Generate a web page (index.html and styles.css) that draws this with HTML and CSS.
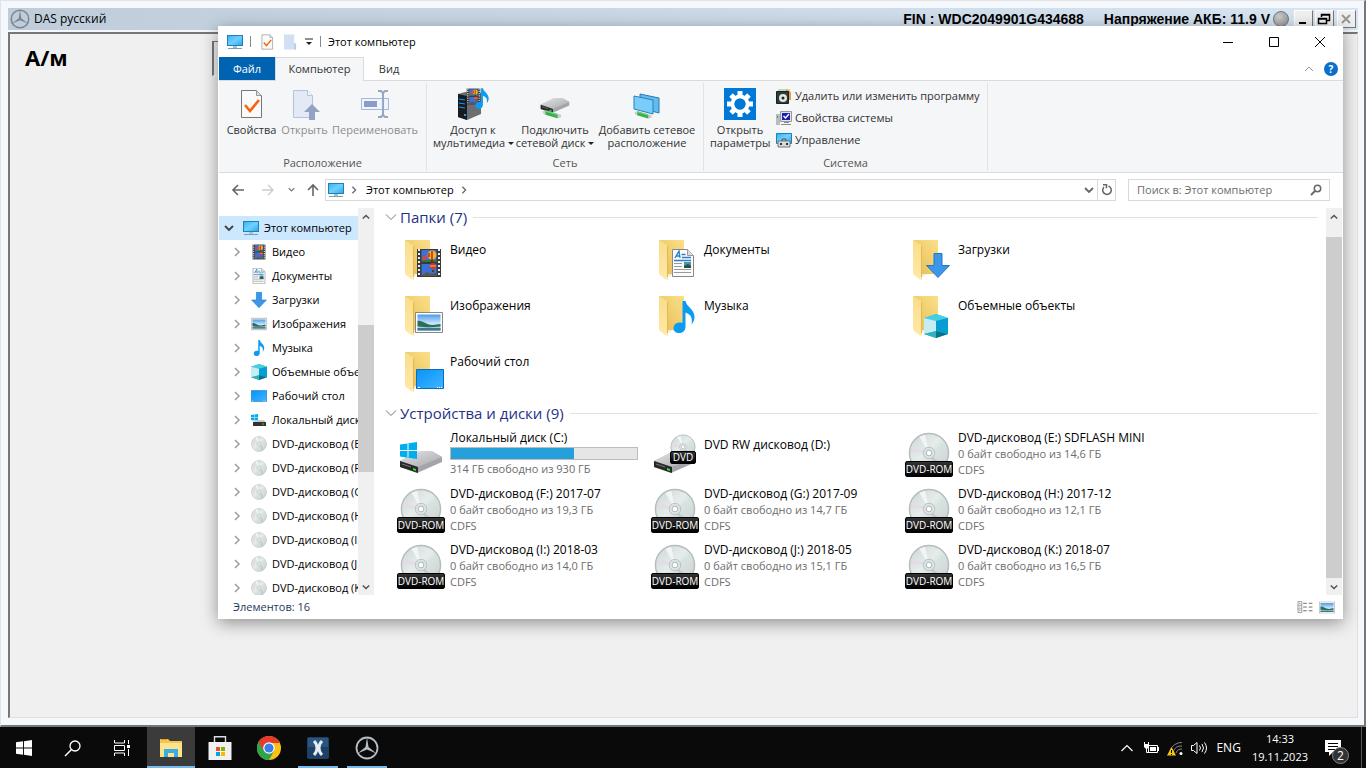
FILE: index.html
```html
<!DOCTYPE html>
<html lang="ru">
<head>
    <meta charset="UTF-8">
    <meta name="viewport" content="width=device-width, initial-scale=1.0">
    <title>Этот компьютер</title>
    <link rel="stylesheet" href="styles.css">
</head>
<body>
    <!-- Icon sprite -->
    <svg class="sprite" aria-hidden="true">
        <defs>
            <linearGradient id="gScreen" x1="0" y1="0" x2="1" y2="1"><stop offset="0" stop-color="#35b2f3"/><stop offset="0.5" stop-color="#6fd0ff"/><stop offset="1" stop-color="#2aa5ec"/></linearGradient>
            <linearGradient id="gFolder" x1="1" y1="0" x2="0" y2="1"><stop offset="0" stop-color="#fbe08a"/><stop offset="1" stop-color="#e6bc52"/></linearGradient>
            <linearGradient id="gFlap" x1="0" y1="0" x2="0" y2="1"><stop offset="0" stop-color="#f9dd8a"/><stop offset="1" stop-color="#ffe9a8"/></linearGradient>
            <linearGradient id="gDisc" x1="0" y1="0" x2="1" y2="1"><stop offset="0" stop-color="#cbd5d5"/><stop offset="0.45" stop-color="#e6ecec"/><stop offset="0.6" stop-color="#d8e0e0"/><stop offset="1" stop-color="#c8cfcf"/></linearGradient>
            <linearGradient id="gSky" x1="0" y1="0" x2="0" y2="1"><stop offset="0" stop-color="#4c9bea"/><stop offset="0.6" stop-color="#d4ebf8"/><stop offset="1" stop-color="#7fb2d0"/></linearGradient>
            <linearGradient id="gDrive" x1="0" y1="0" x2="1" y2="1"><stop offset="0" stop-color="#e6e6e8"/><stop offset="1" stop-color="#a5a6aa"/></linearGradient>
            <linearGradient id="gDesk" x1="0" y1="0" x2="1" y2="1"><stop offset="0" stop-color="#0b93f5"/><stop offset="0.5" stop-color="#22a4ff"/><stop offset="1" stop-color="#45b4ff"/></linearGradient>
        </defs>
        <symbol id="i-pc" viewBox="0 0 16 16">
            <rect x="0.5" y="1.5" width="15" height="10" fill="url(#gScreen)" stroke="#1f7fb8"/>
            <path d="M6 12h4v2H6z" fill="#9fc3da"/><path d="M1 14.5h14" stroke="#7d9db2"/>
        </symbol>
        <symbol id="i-chev" viewBox="0 0 10 10"><path d="M3 1l4 4-4 4" fill="none" stroke="currentColor" stroke-width="1.6"/></symbol>
        <symbol id="i-down" viewBox="0 0 10 10"><path d="M1 3l4 4 4-4" fill="none" stroke="currentColor" stroke-width="1.8"/></symbol>
        <symbol id="i-up" viewBox="0 0 10 10"><path d="M1 7l4-4 4 4" fill="none" stroke="currentColor" stroke-width="1.8"/></symbol>
        <symbol id="i-thin" viewBox="0 0 12 12"><path d="M1 3.5l5 5 5-5" fill="none" stroke="currentColor"/></symbol>
        <symbol id="i-check" viewBox="0 0 24 30">
            <path d="M1.5 1.5h15l5 5v22h-20z" fill="#fafafa" stroke="#777"/><path d="M16.5 1.5v5h5" fill="#ddd" stroke="#999"/>
            <path d="M5 16l5 6 9-11" fill="none" stroke="#f7630c" stroke-width="2.6"/>
        </symbol>
        <symbol id="i-film" viewBox="0 0 26 30">
            <path d="M1 1h24v28H1z" fill="#3a3a3a"/>
            <path d="M3 1v28M23 1v28" stroke="#eee" stroke-width="2" stroke-dasharray="2 2"/>
            <path d="M5.500 2h15v12h-15zM5.500 16h15v12h-15z" fill="#3b70d6"/>
            <path d="M6 9l3-2 3 2-2 3H6z" fill="#b8505a"/><path d="M6 12h15v2H6z" fill="#38743a"/>
            <circle cx="16" cy="7" r="4.500" fill="#f3b51e"/><path d="M16 3v9M13 5v4" stroke="#c3241d" stroke-width="1.500"/><path d="M15 12h2v2h-2z" fill="#5b3a1c"/>
            <circle cx="17" cy="18" r="3" fill="#d9302a"/><path d="M14 18h6" stroke="#f8ca2f"/><path d="M16 22h2v2h-2z" fill="#5b3a1c"/><path d="M6 27l5-3 4 2 5-1v3H6z" fill="#5a5648"/>
        </symbol>
        <symbol id="i-doc" viewBox="0 0 22 28">
            <path d="M.5 .5h15l6 6v21h-21z" fill="#fbfbfb" stroke="#888"/><path d="M15.5 .5v6h6" fill="#ddd" stroke="#999"/>
            <path d="M3 9l4-7 1 7M4 7h4M9.5 5.5h4M10 8.5h9M2 11.5h17" fill="none" stroke="#2a7ec2" stroke-width="1.3"/>
            <path d="M2 14.500h8M2 17.500h8M2 20.500h17M2 23.500h17" stroke="#999"/><path d="M12 13h7v6h-7z" fill="#4d93b5"/><path d="M12 17l4-2 3 2v2h-7z" fill="#28543c"/>
        </symbol>
        <symbol id="i-load" viewBox="0 0 24 25"><path d="M8 .5h8v12h7.5L12 24.5.5 12.5H8z" fill="#3b97e8" stroke="#2178c6"/></symbol>
        <symbol id="i-pic" viewBox="0 0 28 21">
            <path d="M.5 .5h27v20H.5z" fill="#fff" stroke="#888"/><path d="M2.5 2.5h23v16h-23z" fill="url(#gSky)"/>
            <path d="M2.5 9c5-1 8 4 15 4 3 0 5-1 8-1v2.500c-7 1-14 1-23 0z" fill="#2e6e58"/><path d="M2.5 16h23v2.500h-23z" fill="#3d7890"/>
        </symbol>
        <symbol id="i-note" viewBox="0 0 22 32"><path d="M9.500 0h3c1 6 9 8 9 16 0 4-2 6-3 7.500 1-6 0-10-6-12v14c0 9-12 8-12 2 0-5 5-7 9-5.500z" fill="#0d9bf2"/></symbol>
        <symbol id="i-cube" viewBox="0 0 24 24">
            <path d="M12 0l12 4v16l-12 4-12-4V4z" fill="#31b9d6"/><path d="M12 0l12 4-12 3L0 4z" fill="#45cfe1"/><path d="M0 4l12 3v10L0 20z" fill="#c5edf3"/>
            <path d="M24 4L12 7v10l12 3z" fill="#069ed5"/><path d="M0 20l12-3v7z" fill="#2fb2be"/><path d="M24 20l-12-3v7z" fill="#087386"/>
        </symbol>
        <symbol id="i-desk" viewBox="0 0 28 20"><path d="M.5 .5h27v19H.5z" fill="url(#gDesk)" stroke="#0a6db8"/><path d="M2 18.500h2M21 18.500h1M23 18.500h1M25 18.500h1" stroke="#fff"/></symbol>
        <symbol id="i-win" viewBox="0 0 17 17"><path d="M0 2.500l7.500-1.100v6.700H0zM8.500 1.200L17 0v8H8.500zM0 9h7.500v6.700L0 14.600zM8.500 9H17v8l-8.500-1.200z" fill="currentColor"/></symbol>
        <symbol id="i-folder" viewBox="0 0 48 48">
            <path d="M8 4h25v34H8z" fill="url(#gFolder)"/><path d="M8 4l9 6v34l-3-1-6-5z" fill="url(#gFlap)"/><path d="M16.500 10v31" stroke="#e1b950"/><path d="M17 41l6-3h-6z" fill="#eee"/>
        </symbol>
        <symbol id="i-disc" viewBox="0 0 44 44">
            <circle cx="22" cy="22" r="20.500" fill="url(#gDisc)" stroke="#b4bcbc" stroke-width="1.500"/>
            <path d="M22 22L4 15a19 19 0 0 0-1 6z" fill="#e3dbe6"/><path d="M22 22L38 11l2 4z" fill="#d2e6d8"/><path d="M22 22L12 5l6-2z" fill="#f2f5f5"/><path d="M22 22l14 13-6 5z" fill="#c2cccc"/>
            <circle cx="22" cy="22" r="6" fill="#dfe4e4" stroke="#b8c0c0"/><circle cx="22" cy="22" r="3" fill="#fff" stroke="#aab2b2"/>
        </symbol>
        <symbol id="i-drive" viewBox="0 0 44 24">
            <path d="M1 11L22 1h10l11 6v5L18 23 1 17z" fill="#a4a5a9"/><path d="M1 11L20 1h13l10 6-24 10z" fill="url(#gDrive)"/><path d="M1 11l18 6v6L1 17z" fill="#292929"/><path d="M3 14l9 3" stroke="#777"/><path d="M14 18l3 1v2l-3-1z" fill="#2ce03a"/>
        </symbol>
        <symbol id="i-rom" viewBox="0 0 48 48"><use href="#i-disc" x="3" y="2" width="42" height="42"/></symbol>
        <symbol id="i-dvdrw" viewBox="0 0 48 48">
            <use href="#i-drive" x="2" y="20" width="44" height="24"/>
            <use href="#i-disc" x="19" y="4" width="26" height="26"/>
        </symbol>
        <symbol id="i-hdd" viewBox="0 0 48 48">
            <use href="#i-drive" x="2" y="20" width="44" height="24"/>
            <g color="#00adef"><use href="#i-win" x="3" y="12" width="17" height="17"/></g>
        </symbol>
        <symbol id="i-star" viewBox="0 0 24 24">
            <circle cx="12" cy="12" r="10.500" fill="none" stroke="currentColor" stroke-width="1.800"/>
            <path d="M12 1l1.500 10 8 6.500-9.500-4-9.500 4 8-6.500z" fill="currentColor"/>
        </symbol>
        <symbol id="i-net" viewBox="0 0 34 14">
            <path d="M1 3l6-1 20 6v4l-5 1L2 7z" fill="#c9cdd0"/><path d="M5 2l17 5v6L5 8z" fill="#37b24a"/><path d="M5 3l17 5" stroke="#9ae6a2"/>
        </symbol>
    </svg>

    <!-- DAS application behind the explorer -->
    <main class="das">
        <header class="das-title">
            <svg class="das-logo"><use href="#i-star"/></svg>
            <span class="das-name">DAS русский</span>
            <strong>FIN : WDC2049901G434688</strong>
            <strong class="das-volt">Напряжение АКБ: 11.9 V</strong>
            <span class="das-lamp"></span>
            <button class="das-btn" aria-label="Свернуть DAS"><svg viewBox="0 0 16 16"><path d="M4 12h7" stroke="#000" stroke-width="2"/></svg></button>
            <button class="das-btn" aria-label="Восстановить DAS"><svg viewBox="0 0 16 16"><path d="M5.500 6V3.500h8v6H11M5 4h9M2.500 7.500h8v5h-8zM2 8h9" fill="none" stroke="#000" stroke-width="1.500"/></svg></button>
            <button class="das-btn das-btn-off" aria-label="Закрыть DAS"><svg viewBox="0 0 16 16"><path d="M4 4l8 8M12 4l-8 8" stroke="#999" stroke-width="2"/></svg></button>
        </header>
        <section class="das-body">
            <h1>А/м</h1>
            <div class="das-panel"></div>
        </section>
    </main>

    <!-- Explorer window -->
    <section class="explorer">
        <header class="titlebar">
            <svg class="ic16"><use href="#i-pc"/></svg>
            <span class="sep"></span>
            <button class="quick" aria-label="Свойства"><svg viewBox="0 0 24 30"><use href="#i-check"/></svg></button>
            <button class="quick" aria-label="Новая папка"><svg viewBox="0 0 14 16"><path d="M0 0h11v9l2 1v6H0z" fill="#d3e0f4"/><path d="M11 9l2 1v6h-2z" fill="#b8cbea"/></svg></button>
            <button class="quick quick-more" aria-label="Настройка панели"><svg viewBox="0 0 8 8"><path d="M0 1h8" stroke="#222"/><path d="M1 4h6L4 7z" fill="#222"/></svg></button>
            <span class="sep"></span>
            <span class="win-name">Этот компьютер</span>
            <div class="win-btns">
                <button aria-label="Свернуть"><svg viewBox="0 0 12 12"><path d="M1 6.500h10" stroke="#000"/></svg></button>
                <button aria-label="Развернуть"><svg viewBox="0 0 12 12"><path d="M1.500 1.500h9v9h-9z" fill="none" stroke="#000"/></svg></button>
                <button aria-label="Закрыть"><svg viewBox="0 0 12 12"><path d="M1 1l10 10M11 1L1 11" stroke="#000"/></svg></button>
            </div>
        </header>

        <nav class="tabs">
            <button class="tab tab-file">Файл</button>
            <button class="tab tab-active">Компьютер</button>
            <button class="tab tab-view">Вид</button>
            <button class="collapse" aria-label="Свернуть ленту"><svg viewBox="0 0 10 10"><path d="M1 7l4-4 4 4" fill="none" stroke="#999"/></svg></button>
            <button class="help">?</button>
        </nav>

        <div class="ribbon">
            <section class="group g-place">
                <div class="group-items">
                    <button class="big w-props"><svg viewBox="0 0 32 32"><use href="#i-check" x="4" y="1" width="24" height="30"/></svg>Свойства</button>
                    <button class="big w-open" disabled><svg viewBox="0 0 32 32"><path d="M4.500 2.500h14l5 5v22h-19z" fill="#e3e9f5" stroke="#b6c2dc"/><path d="M18.500 2.500v5h5" fill="#f4f6fb" stroke="#b6c2dc"/><path d="M23 16l8 8h-5v8h-6v-8h-5z" fill="#94a2c4"/></svg>Открыть</button>
                    <button class="big w-rename" disabled><svg viewBox="0 0 32 32"><path d="M2.500 10.500h27v11h-27z" fill="#f0f4fb" stroke="#a5b6d8"/><path d="M5 13h13v6H5z" fill="#8b9dc4"/><path d="M19 3h3l2 2 2-2h3M24 5v22M19 29h3l2-2 2 2h3" fill="none" stroke="#98a6c6" stroke-width="2"/></svg>Переименовать</button>
                </div>
                <h2>Расположение</h2>
            </section>
            <section class="group g-net">
                <div class="group-items">
                    <button class="big w-media"><svg viewBox="0 0 32 32"><path d="M1 6l7-2 16 1v21l-14 6-9-3z" fill="#6b6e73"/><path d="M1 6l9 2v24l-9-3z" fill="#171b21"/><path d="M2 11l6 1M2 15l6 1M2 19l6 1" stroke="#1d9aec"/><circle cx="8" cy="27" r="1" fill="#37c8ff"/><use href="#i-film" x="9" y="0" width="15" height="17"/><use href="#i-note" x="18" y="0" width="14" height="21"/></svg>Доступ к<br>мультимедиа <i class="caret"></i></button>
                    <button class="big w-map"><svg viewBox="0 0 32 32"><use href="#i-drive" x="1" y="9" width="30" height="17"/><use href="#i-net" x="3" y="20" width="24" height="12"/></svg>Подключить<br>сетевой диск <i class="caret"></i></button>
                    <button class="big w-addnet"><svg viewBox="0 0 32 32"><path d="M9 6l19 4v15L9 20z" fill="#64b9ef" stroke="#267bb4"/><path d="M3 8l19 4v14L3 21z" fill="#7bcdf9" stroke="#2583bd"/><use href="#i-net" x="3" y="21" width="22" height="11"/></svg>Добавить сетевое<br>расположение</button>
                </div>
                <h2>Сеть</h2>
            </section>
            <section class="group g-sys">
                <div class="group-items">
                    <button class="big w-settings"><svg viewBox="0 0 32 32"><path d="M0 0h32v32H0z" fill="#0078d7"/><circle cx="16" cy="16" r="7.500" fill="none" stroke="#fff" stroke-width="4"/><path d="M16 3v5M16 24v5M3 16h5M24 16h5M7 7l3 3M22 22l3 3M25 7l-3 3M10 22l-3 3" stroke="#fff" stroke-width="5"/><circle cx="16" cy="16" r="5.500" fill="#0078d7"/></svg>Открыть<br>параметры</button>
                    <div class="small-list">
                        <button class="small"><svg viewBox="0 0 16 16"><path d="M2 1h12v3H2z" fill="#c7d8b8"/><path d="M10 1l5 3v8h-5z" fill="#e59b4e"/><path d="M.500 3.500h12v12H.500z" fill="#30393b" stroke="#182022"/><circle cx="7" cy="10" r="4" fill="#dfe6e6"/><circle cx="7" cy="10" r="1.500" fill="#222"/></svg>Удалить или изменить программу</button>
                        <button class="small"><svg viewBox="0 0 16 16"><path d="M0 4h4v11H0z" fill="#b8bcc0"/><path d="M1 6h1v2H1z" fill="#2bb739"/><path d="M4.500 1.500h11v10h-11z" fill="#e3e3e3" stroke="#999"/><path d="M6 3h8v7H6z" fill="#1721b8"/><path d="M7.500 6l2 2 3.500-4" fill="none" stroke="#fff" stroke-width="1.400"/><path d="M8 12h5v1H8zM5 14h10v1H5z" fill="#888"/></svg>Свойства системы</button>
                        <button class="small"><svg viewBox="0 0 16 16"><path d="M.500 1.500h15v10H.500z" fill="url(#gScreen)" stroke="#267bb4"/><path d="M2 9h12v6H2z" fill="#d8dadc" stroke="#777"/><path d="M6 9V7h4v2" fill="none" stroke="#555"/><path d="M4 11h2v2H4zM10 11h2v2h-2z" fill="#333"/></svg>Управление</button>
                    </div>
                </div>
                <h2>Система</h2>
            </section>
        </div>

        <div class="navbar">
            <button class="nav-btn" aria-label="Назад"><svg viewBox="0 0 14 14"><path d="M13 7H2M7 2L2 7l5 5" fill="none" stroke="#666" stroke-width="1.600"/></svg></button>
            <button class="nav-btn" aria-label="Вперед" disabled><svg viewBox="0 0 14 14"><path d="M1 7h11M7 2l5 5-5 5" fill="none" stroke="#ccc" stroke-width="1.400"/></svg></button>
            <button class="nav-btn nav-recent" aria-label="Последние"><svg viewBox="0 0 10 10"><use href="#i-down"/></svg></button>
            <button class="nav-btn nav-up" aria-label="Вверх"><svg viewBox="0 0 14 14"><path d="M7 13V2M2 7l5-5 5 5" fill="none" stroke="#666" stroke-width="1.600"/></svg></button>
            <div class="address">
                <svg class="ic16"><use href="#i-pc"/></svg>
                <svg class="crumb"><use href="#i-chev"/></svg>
                <a href="#">Этот компьютер</a>
                <svg class="crumb"><use href="#i-chev"/></svg>
                <button class="addr-drop" aria-label="Предыдущие расположения"><svg viewBox="0 0 10 10"><use href="#i-down"/></svg></button>
                <button class="addr-refresh" aria-label="Обновить"><svg viewBox="0 0 12 12"><path d="M3 3a4.300 4.300 0 1 0 6 0M9 3L7.500 2M2 .800h3.500v3.500" fill="none" stroke="#666" stroke-width="1.500"/></svg></button>
            </div>
            <div class="search">
                <input type="text" placeholder="Поиск в: Этот компьютер" aria-label="Поиск">
                <svg viewBox="0 0 12 12"><circle cx="7.500" cy="4.500" r="3.200" fill="none" stroke="#666" stroke-width="1.500"/><path d="M5 7L1 11" stroke="#666" stroke-width="1.800"/></svg>
            </div>
        </div>

        <div class="content">
            <nav class="tree">
                <button class="node node-root"><svg class="arrow"><use href="#i-down"/></svg><svg class="ic16"><use href="#i-pc"/></svg><span>Этот компьютер</span></button>
                <button class="node"><svg class="arrow"><use href="#i-chev"/></svg><svg class="ic16"><use href="#i-film"/></svg><span>Видео</span></button>
                <button class="node"><svg class="arrow"><use href="#i-chev"/></svg><svg class="ic16"><use href="#i-doc"/></svg><span>Документы</span></button>
                <button class="node"><svg class="arrow"><use href="#i-chev"/></svg><svg class="ic16"><use href="#i-load"/></svg><span>Загрузки</span></button>
                <button class="node"><svg class="arrow"><use href="#i-chev"/></svg><svg class="ic16"><use href="#i-pic"/></svg><span>Изображения</span></button>
                <button class="node"><svg class="arrow"><use href="#i-chev"/></svg><svg class="ic16"><use href="#i-note"/></svg><span>Музыка</span></button>
                <button class="node"><svg class="arrow"><use href="#i-chev"/></svg><svg class="ic16"><use href="#i-cube"/></svg><span>Объемные объекты</span></button>
                <button class="node"><svg class="arrow"><use href="#i-chev"/></svg><svg class="ic16"><use href="#i-desk"/></svg><span>Рабочий стол</span></button>
                <button class="node"><svg class="arrow"><use href="#i-chev"/></svg><svg class="ic16" viewBox="0 0 16 16"><g color="#00adef"><use href="#i-win" x="0" y="2" width="7" height="7"/></g><path d="M4 8h9l2 3H2z" fill="#c9cbcd"/><path d="M2 10h13v4H2z" fill="#333"/><path d="M11 12h2" stroke="#2ce03a"/></svg><span>Локальный диск (C:)</span></button>
                <button class="node"><svg class="arrow"><use href="#i-chev"/></svg><svg class="ic16"><use href="#i-disc"/></svg><span>DVD-дисковод (E:)</span></button>
                <button class="node"><svg class="arrow"><use href="#i-chev"/></svg><svg class="ic16"><use href="#i-disc"/></svg><span>DVD-дисковод (F:)</span></button>
                <button class="node"><svg class="arrow"><use href="#i-chev"/></svg><svg class="ic16"><use href="#i-disc"/></svg><span>DVD-дисковод (G:)</span></button>
                <button class="node"><svg class="arrow"><use href="#i-chev"/></svg><svg class="ic16"><use href="#i-disc"/></svg><span>DVD-дисковод (H:)</span></button>
                <button class="node"><svg class="arrow"><use href="#i-chev"/></svg><svg class="ic16"><use href="#i-disc"/></svg><span>DVD-дисковод (I:)</span></button>
                <button class="node"><svg class="arrow"><use href="#i-chev"/></svg><svg class="ic16"><use href="#i-disc"/></svg><span>DVD-дисковод (J:)</span></button>
                <button class="node"><svg class="arrow"><use href="#i-chev"/></svg><svg class="ic16"><use href="#i-disc"/></svg><span>DVD-дисковод (K:)</span></button>
            </nav>
            <div class="scroll">
                <button aria-label="Дерево вверх"><svg viewBox="0 0 10 10"><use href="#i-up"/></svg></button>
                <div class="track track-tree"><div class="thumb"></div></div>
                <button aria-label="Дерево вниз"><svg viewBox="0 0 10 10"><use href="#i-down"/></svg></button>
            </div>

            <div class="files">
                <h3><svg><use href="#i-thin"/></svg>Папки (7)</h3>
                <div class="tiles">
                    <a class="tile folder" href="#"><svg viewBox="0 0 48 48"><use href="#i-folder"/><use href="#i-film" x="19" y="12" width="26" height="30"/></svg><span class="info">Видео</span></a>
                    <a class="tile folder" href="#"><svg viewBox="0 0 48 48"><use href="#i-folder"/><use href="#i-doc" x="21" y="13" width="22" height="28"/></svg><span class="info">Документы</span></a>
                    <a class="tile folder" href="#"><svg viewBox="0 0 48 48"><use href="#i-folder"/><use href="#i-load" x="21" y="17" width="24" height="25"/></svg><span class="info">Загрузки</span></a>
                    <a class="tile folder" href="#"><svg viewBox="0 0 48 48"><use href="#i-folder"/><use href="#i-pic" x="18" y="20" width="28" height="21"/></svg><span class="info">Изображения</span></a>
                    <a class="tile folder" href="#"><svg viewBox="0 0 48 48"><use href="#i-folder"/><use href="#i-note" x="22" y="9" width="22" height="32"/></svg><span class="info">Музыка</span></a>
                    <a class="tile folder" href="#"><svg viewBox="0 0 48 48"><use href="#i-folder"/><use href="#i-cube" x="19" y="22" width="24" height="24"/></svg><span class="info">Объемные объекты</span></a>
                    <a class="tile folder" href="#"><svg viewBox="0 0 48 48"><use href="#i-folder"/><use href="#i-desk" x="19" y="21" width="28" height="20"/></svg><span class="info">Рабочий стол</span></a>
                </div>

                <h3><svg><use href="#i-thin"/></svg>Устройства и диски (9)</h3>
                <div class="tiles">
                    <a class="tile" href="#"><svg viewBox="0 0 48 48"><use href="#i-hdd"/></svg><span class="info">Локальный диск (C:)<span class="meter"><span style="width: 66%"></span></span><small>314 ГБ свободно из 930 ГБ</small></span></a>
                    <a class="tile tile-rw" href="#"><svg viewBox="0 0 48 48"><use href="#i-dvdrw"/></svg><span class="tag tag-rw">DVD</span><span class="info">DVD RW дисковод (D:)</span></a>
                    <a class="tile" href="#"><svg viewBox="0 0 48 48"><use href="#i-rom"/></svg><span class="tag">DVD-ROM</span><span class="info">DVD-дисковод (E:) SDFLASH MINI<small>0 байт свободно из 14,6 ГБ</small><small>CDFS</small></span></a>
                    <a class="tile" href="#"><svg viewBox="0 0 48 48"><use href="#i-rom"/></svg><span class="tag">DVD-ROM</span><span class="info">DVD-дисковод (F:) 2017-07<small>0 байт свободно из 19,3 ГБ</small><small>CDFS</small></span></a>
                    <a class="tile" href="#"><svg viewBox="0 0 48 48"><use href="#i-rom"/></svg><span class="tag">DVD-ROM</span><span class="info">DVD-дисковод (G:) 2017-09<small>0 байт свободно из 14,7 ГБ</small><small>CDFS</small></span></a>
                    <a class="tile" href="#"><svg viewBox="0 0 48 48"><use href="#i-rom"/></svg><span class="tag">DVD-ROM</span><span class="info">DVD-дисковод (H:) 2017-12<small>0 байт свободно из 12,1 ГБ</small><small>CDFS</small></span></a>
                    <a class="tile" href="#"><svg viewBox="0 0 48 48"><use href="#i-rom"/></svg><span class="tag">DVD-ROM</span><span class="info">DVD-дисковод (I:) 2018-03<small>0 байт свободно из 14,0 ГБ</small><small>CDFS</small></span></a>
                    <a class="tile" href="#"><svg viewBox="0 0 48 48"><use href="#i-rom"/></svg><span class="tag">DVD-ROM</span><span class="info">DVD-дисковод (J:) 2018-05<small>0 байт свободно из 15,1 ГБ</small><small>CDFS</small></span></a>
                    <a class="tile" href="#"><svg viewBox="0 0 48 48"><use href="#i-rom"/></svg><span class="tag">DVD-ROM</span><span class="info">DVD-дисковод (K:) 2018-07<small>0 байт свободно из 16,5 ГБ</small><small>CDFS</small></span></a>
                </div>
            </div>
            <div class="scroll">
                <button aria-label="Вверх по списку"><svg viewBox="0 0 10 10"><use href="#i-up"/></svg></button>
                <div class="track track-files"><div class="thumb"></div></div>
                <button aria-label="Вниз по списку"><svg viewBox="0 0 10 10"><use href="#i-down"/></svg></button>
            </div>
        </div>

        <footer class="status">
            <span>Элементов: 16</span>
            <button aria-label="Таблица"><svg viewBox="0 0 16 14"><path d="M.500 .500h4v12h-4zM0 4.500h5M0 8.500h5" fill="none" stroke="#999"/><path d="M6 2.500h4M12 2.500h4M6 6.500h4M12 6.500h4M6 10.500h4M12 10.500h4" stroke="#666"/><path d="M2 2.500h1M2 6.500h1" stroke="#3a76c4"/><path d="M2 10.500h1" stroke="#c33"/></svg></button>
            <button aria-label="Крупные значки"><svg viewBox="0 0 28 21"><use href="#i-pic"/></svg></button>
        </footer>
    </section>

    <footer class="taskbar">
        <button class="task" aria-label="Пуск"><svg class="t-start" viewBox="0 0 17 17"><use href="#i-win"/></svg></button>
        <button class="task" aria-label="Поиск Windows"><svg viewBox="0 0 18 18"><circle cx="11" cy="7" r="5" fill="none" stroke="#fff" stroke-width="1.300"/><path d="M7.500 10.500L1 17" stroke="#fff" stroke-width="1.500"/></svg></button>
        <button class="task" aria-label="Представление задач"><svg viewBox="0 0 18 18"><path d="M1.500 1v3h10V1M1.500 17v-3h10v3M1.500 6.500h10v5h-10zM15.500 1v4M15.500 10v7" fill="none" stroke="#fff"/><path d="M14 6h3v3h-3z" fill="#fff"/></svg></button>
        <button class="task task-open" aria-label="Проводник"><svg viewBox="0 0 24 24"><path d="M1 3h8l2 2h12v15H1z" fill="#f3c64f"/><path d="M2 3h6v1H2z" fill="#e39d20"/><path d="M1 7h22v14H1z" fill="#ffe28c"/><path d="M5 21v-8h14v8h-4v-4H9v4z" fill="#3aace4"/></svg></button>
        <button class="task" aria-label="Магазин"><svg viewBox="0 0 24 24"><path d="M6.500 7V.700h11V7" fill="none" stroke="#ddd" stroke-width="1.400"/><path d="M.500 6h23v18H.500z" fill="#f1f1f1"/><path d="M8 11h4v4H8z" fill="#f04f23"/><path d="M13 11h4v4h-4z" fill="#7eb900"/><path d="M8 16h4v4H8z" fill="#00a3ee"/><path d="M13 16h4v4h-4z" fill="#ffb800"/></svg></button>
        <button class="task" aria-label="Chrome"><svg viewBox="0 0 24 24"><circle cx="12" cy="12" r="12" fill="#fbc115"/><path d="M12 12L1.600 6A12 12 0 0 0 12 24l5-9z" fill="#2da44e"/><path d="M1.600 6A12 12 0 0 1 22.400 6L23 7H12l-5.200 8z" fill="#e33b2e"/><circle cx="12" cy="12" r="5.800" fill="#fff"/><circle cx="12" cy="12" r="4.600" fill="#3b7de9"/></svg></button>
        <button class="task task-run" aria-label="Xentry"><svg viewBox="0 0 24 24"><rect x="1" y="1" width="22" height="22" rx="2" fill="#1d4166"/><path d="M2 2h20v9H2z" fill="#2a5580"/><path d="M8 5c4 4 4 10 0 14M16 5c-4 4-4 10 0 14" fill="none" stroke="#e4ebf1" stroke-width="3"/></svg></button>
        <button class="task task-run t-das" aria-label="DAS"><svg viewBox="0 0 24 24"><use href="#i-star"/></svg></button>

        <div class="tray">
            <button aria-label="Скрытые значки"><svg viewBox="0 0 16 16"><path d="M2.500 11L8 5.500l5.500 5.500" fill="none" stroke="#fff" stroke-width="1.200"/></svg></button>
            <button aria-label="Батарея"><svg viewBox="0 0 16 16"><path d="M5.500 5.500h9v7h-9z" fill="none" stroke="#fff"/><path d="M7 7h6v4H7zM15 7h1v4h-1zM1 4h5v3L4 9H3L1 7zM1 2h1v2H1zM5 2h1v2H5z" fill="#fff"/><path d="M3.500 8v4.500H6" fill="none" stroke="#fff"/></svg></button>
            <button aria-label="Сеть"><svg viewBox="0 0 16 16"><path d="M3 11A12 12 0 0 1 15 2.500M6 12a9 9 0 0 1 9-6M9 13a6 6 0 0 1 6-4" fill="none" stroke="#888"/><circle cx="14" cy="13.500" r="1.500" fill="#fff"/><path d="M4.500 7L9 15.500H0z" fill="#f9c80e"/><path d="M4.500 10v3M4.500 14v1" stroke="#000"/></svg></button>
            <button aria-label="Громкость"><svg viewBox="0 0 16 16"><path d="M.500 5.500h2L6 2.500v11l-3.500-3h-2z" fill="none" stroke="#fff"/><path d="M8.500 5.500q2 2.500 0 5M11 4q3 4 0 8M13.500 2.500q4 5.500 0 11" fill="none" stroke="#fff"/></svg></button>
            <button class="lang">ENG</button>
            <button class="clock">14:33<br>19.11.2023</button>
            <button class="notify" aria-label="Уведомления"><svg viewBox="0 0 16 16"><path d="M0 0h16v12H8l-4 4v-4H0z" fill="#fff"/><path d="M3 3.500h10M3 6.500h10M3 9.500h7" stroke="#000"/></svg><span class="badge">2</span></button>
        </div>
    </footer>
</body>
</html>
```
FILE: styles.css
```css
* {
    box-sizing: border-box;
}

body {
    margin: 0;
    height: 100vh;
    display: flex;
    flex-direction: column;
    overflow: hidden;
    font-family: "Open Sans", "Noto Sans", sans-serif;
    font-size: 12px;
    line-height: 16px;
    color: #000;
}

button {
    padding: 0;
    border: 0;
    background: none;
    font: inherit;
    color: inherit;
}

a {
    color: inherit;
    text-decoration: none;
}

svg {
    display: block;
    flex: none;
}

h1, h2, h3 {
    margin: 0;
    font-weight: normal;
}

.sprite {
    position: absolute;
    width: 0;
    height: 0;
}

.ic16 {
    width: 16px;
    height: 16px;
}

/* DAS window */
.das {
    flex: 1;
    min-height: 0;
    display: flex;
    flex-direction: column;
    padding: 7px 6px 7px 7px;
    background: #f4f7fc;
    border: 1px solid #e3e3e3;
    border-right: 2px solid #777;
    border-bottom: 2px solid #777;
}

.das-title {
    display: flex;
    align-items: center;
    height: 22px;
    padding: 0 2px;
    background: linear-gradient(90deg, #bfcddb, #d7e4f2);
}

.das-logo {
    width: 20px;
    height: 20px;
    color: #7c858c;
}

.das-name {
    flex: 1;
    margin-left: 4px;
}

.das-title strong {
    font-family: "Liberation Sans", sans-serif;
    font-size: 14px;
}

.das-title .das-volt {
    margin-left: 20px;
}

.das-lamp {
    width: 16px;
    height: 16px;
    margin: 0 3px;
    border: 1px solid #777;
    border-radius: 50%;
    background: radial-gradient(circle at 35% 35%, #ccc, #8e8e8e);
}

.das-btn {
    width: 19px;
    height: 18px;
    margin-left: 2px;
    background: #f0f0f0;
    border: 1px solid #fff;
    border-right-color: #777;
    border-bottom-color: #777;
}

.das-btn svg {
    width: 16px;
    height: 16px;
}

.das-btn-off {
    margin-left: 3px;
}

.das-body {
    flex: 1;
    display: flex;
    margin-top: 2px;
    padding: 7px 15px;
    background: #f0f0f0;
    border: 1px solid #e0e0e0;
    border-top: 2px solid #777;
    border-left: 2px solid #777;
}

.das-body h1 {
    width: 187px;
    padding-top: 2px;
    font-family: "Noto Sans", sans-serif;
    font-size: 22px;
    line-height: 28px;
    font-weight: bold;
}

.das-panel {
    flex: 1;
    height: 35px;
    border: 1px solid #fff;
    border-top-color: #777;
    border-left: 2px solid #777;
}

/* Explorer */
.explorer {
    position: absolute;
    top: 26px;
    right: 23px;
    bottom: 149px;
    left: 218px;
    display: flex;
    flex-direction: column;
    padding-left: 1px;
    background: #fff;
    box-shadow: 0 4px 16px rgba(0, 0, 0, 0.4);
    font-size: 11px;
}

.titlebar {
    display: flex;
    align-items: center;
    height: 31px;
    padding-left: 8px;
}

.sep {
    width: 1px;
    height: 11px;
    margin-left: 7px;
    background: #888;
}

.quick {
    margin-left: 10px;
}

.quick svg {
    width: 13px;
    height: 16px;
}

.quick-more svg {
    width: 8px;
    height: 8px;
}

.quick-more {
    margin-left: 8px;
}

.win-name {
    margin-left: 7px;
}

.win-btns {
    display: flex;
    margin-left: auto;
}

.win-btns button {
    width: 46px;
    height: 31px;
    display: flex;
    align-items: center;
    justify-content: center;
}

.win-btns svg {
    width: 12px;
    height: 12px;
}

.tabs {
    display: flex;
    align-items: center;
    height: 24px;
    border-bottom: 1px solid #dadbdc;
}

.tab {
    height: 24px;
    color: #333;
}

.tab-file {
    width: 56px;
    height: 23px;
    background: #0063b1;
    color: #fff;
}

.tab-active {
    width: 89px;
    background: #f5f6f7;
    border: 1px solid #dadbdc;
    border-bottom: 0;
}

.tab-view {
    width: 50px;
}

.collapse {
    margin-left: auto;
}

.collapse svg {
    width: 10px;
    height: 10px;
}

.help {
    width: 14px;
    height: 14px;
    margin: 0 5px 0 10px;
    border-radius: 50%;
    background: #0a6fc9;
    color: #fff;
    font-size: 10px;
    line-height: 14px;
    font-weight: bold;
}

.ribbon {
    display: flex;
    height: 92px;
    background: #f5f6f7;
    border-bottom: 1px solid #dadbdc;
    color: #333;
}

.group {
    display: flex;
    flex-direction: column;
    margin: 2px 0 1px;
    padding: 2px 6px 0;
    border-right: 1px solid #e2e3e4;
}

.g-place {
    width: 208px;
}

.g-net {
    width: 277px;
}

.g-sys {
    width: 284px;
}

.group-items {
    flex: 1;
    display: flex;
}

.group h2 {
    font-size: 11px;
    line-height: 16px;
    text-align: center;
    color: #555;
}

.big {
    display: flow-root;
    align-self: flex-start;
    padding-top: 3px;
    line-height: 13px;
    white-space: nowrap;
}

.big svg {
    width: 32px;
    height: 32px;
    margin: 0 auto 3px;
}

.big:disabled {
    color: #8d8d8d;
}

.w-props {
    width: 53px;
}

.w-open {
    width: 53px;
}

.w-rename {
    width: 88px;
}

.w-media {
    width: 80px;
}

.w-map {
    width: 84px;
}

.w-addnet {
    width: 100px;
}

.w-settings {
    width: 60px;
}

.caret {
    display: inline-block;
    border: 3px solid transparent;
    border-top-color: #222;
    border-bottom: 0;
    vertical-align: 2px;
}

.small-list {
    margin-left: 6px;
}

.small {
    display: flex;
    align-items: center;
    gap: 3px;
    height: 22px;
    white-space: nowrap;
}

.small svg {
    width: 16px;
    height: 16px;
}

.navbar {
    display: flex;
    align-items: center;
    height: 35px;
    padding: 0 13px 2px 12px;
}

.nav-btn {
    margin-right: 16px;
    color: #777;
}

.nav-btn svg {
    width: 14px;
    height: 14px;
}

.nav-btn:disabled {
    margin-right: 13px;
}

.nav-recent {
    margin-right: 11px;
}

.nav-recent svg {
    width: 7px;
    height: 7px;
}

.nav-up {
    margin-right: 5px;
}

.address {
    flex: 1;
    display: flex;
    align-items: center;
    height: 22px;
    margin-right: 12px;
    padding-left: 2px;
    border: 1px solid #d9d9d9;
}

.crumb {
    width: 8px;
    height: 8px;
    margin: 0 8px 0 6px;
    color: #666;
}

.addr-drop {
    margin-left: auto;
    margin-right: 3px;
    color: #666;
}

.addr-drop svg {
    width: 10px;
    height: 10px;
}

.addr-refresh {
    width: 18px;
    height: 20px;
    padding-left: 3px;
    border-left: 1px solid #d9d9d9;
}

.addr-refresh svg {
    width: 12px;
    height: 12px;
}

.search {
    display: flex;
    align-items: center;
    width: 202px;
    height: 22px;
    padding: 0 7px 0 8px;
    border: 1px solid #d9d9d9;
}

.search input {
    flex: 1;
    min-width: 0;
    padding: 0;
    border: 0;
    outline: 0;
    font: inherit;
}

.search input::placeholder {
    color: #6d6d6d;
}

.search svg {
    width: 12px;
    height: 12px;
}

.content {
    flex: 1;
    min-height: 0;
    display: flex;
}

.tree {
    width: 139px;
    padding-top: 8px;
    overflow: hidden;
}

.node {
    display: flex;
    align-items: center;
    gap: 5px;
    width: 100%;
    height: 24px;
    padding-left: 13px;
    white-space: nowrap;
    overflow: hidden;
}

.node-root {
    padding-left: 5px;
    background: #cce8ff;
}

.arrow {
    width: 10px;
    height: 10px;
    margin-right: 4px;
    color: #a0a0a0;
}

.node-root .arrow {
    color: #404040;
}

.scroll {
    width: 16px;
    display: flex;
    flex-direction: column;
    margin-right: 1px;
    background: #f0f0f0;
}

.scroll button {
    height: 17px;
    color: #505050;
}

.scroll svg {
    width: 8px;
    height: 8px;
    margin: 0 auto;
}

.track {
    flex: 1;
    display: flex;
    flex-direction: column;
}

.thumb {
    background: #cdcdcd;
}

.track-tree::before {
    content: "";
    flex: 100;
}

.track-tree .thumb {
    flex: 147;
}

.track-tree::after {
    content: "";
    flex: 106;
}

.track-files::before {
    content: "";
    flex: 12;
}

.track-files .thumb {
    flex: 341;
}

.files {
    flex: 1;
    min-width: 0;
    padding: 0 8px 0 10px;
    overflow: hidden;
}

.files h3 {
    display: flex;
    align-items: center;
    font-size: 15px;
    line-height: 18px;
    color: #1e3287;
}

.files h3 svg {
    width: 12px;
    height: 12px;
    margin-right: 3px;
    color: #777;
}

.files h3::after {
    content: "";
    flex: 1;
    height: 1px;
    margin-left: 6px;
    background: #e2e2e2;
}

.tiles {
    display: grid;
    grid-template-columns: repeat(auto-fill, 254px);
    grid-auto-rows: 56px;
    padding: 8px 0 2px 12px;
}

.tile {
    position: relative;
    display: flex;
    gap: 5px;
}

.tile > svg {
    width: 48px;
    height: 48px;
}

.info {
    width: 188px;
    white-space: nowrap;
    font-size: 12px;
}

.folder > svg {
    margin-top: 2px;
}

.folder .info {
    padding-top: 8px;
}

.tile-rw .info {
    padding-top: 7px;
}

.tile small {
    display: block;
    font-size: 11px;
    color: #6d6d6d;
}

/* Black label over the disc icon */
.tag {
    position: absolute;
    top: 31px;
    left: 0;
    display: flex;
    justify-content: center;
    width: 48px;
    border: 1px solid #000;
    border-radius: 2px;
    background: linear-gradient(#333, #000);
    color: #fff;
    font-size: 10px;
    line-height: 14px;
    white-space: nowrap;
}

.tag-rw {
    top: 21px;
    left: 19px;
    width: 26px;
    line-height: 11px;
}

.meter {
    display: block;
    height: 13px;
    margin: 1px 0;
    border: 1px solid #bcbcbc;
    background: #e6e6e6;
}

.meter span {
    display: block;
    height: 100%;
    background: #26a0da;
}

.status {
    display: flex;
    align-items: center;
    height: 24px;
    padding: 0 8px 0 14px;
    color: #1e395b;
}

.status span {
    flex: 1;
}

.status button {
    margin-left: 6px;
}

.status svg {
    width: 16px;
    height: 13px;
}

/* Taskbar */
.taskbar {
    display: flex;
    height: 41px;
    background: #0a0a0a;
    color: #fff;
}

.task {
    width: 48px;
    margin-right: 1px;
    display: flex;
    align-items: center;
    justify-content: center;
}

.task svg {
    width: 24px;
    height: 24px;
}

.task .t-start {
    width: 16px;
    height: 16px;
}

.task:nth-child(2) svg,
.task:nth-child(3) svg {
    width: 18px;
    height: 18px;
}

.task-open {
    background: #3b3b3b;
    box-shadow: inset 0 -2px #76b9ed;
}

.task-run {
    background: linear-gradient(#76b9ed, #76b9ed) center bottom / 40px 2px no-repeat;
}

.t-das {
    color: #b6bec5;
}

.tray {
    display: flex;
    align-items: center;
    gap: 8px;
    margin-left: auto;
    margin-right: 4px;
    padding-right: 20px;
    border-right: 1px solid #555;
}

.tray svg {
    width: 16px;
    height: 16px;
}

.lang {
    margin-left: 1px;
}

.clock {
    margin-left: 3px;
    font-size: 11px;
    line-height: 18px;
}

.notify {
    position: relative;
    margin-left: 9px;
}

.badge {
    position: absolute;
    top: 7px;
    left: 7px;
    width: 17px;
    height: 17px;
    border: 1px solid #888;
    border-radius: 50%;
    background: #333;
    line-height: 15px;
    text-align: center;
}
```
